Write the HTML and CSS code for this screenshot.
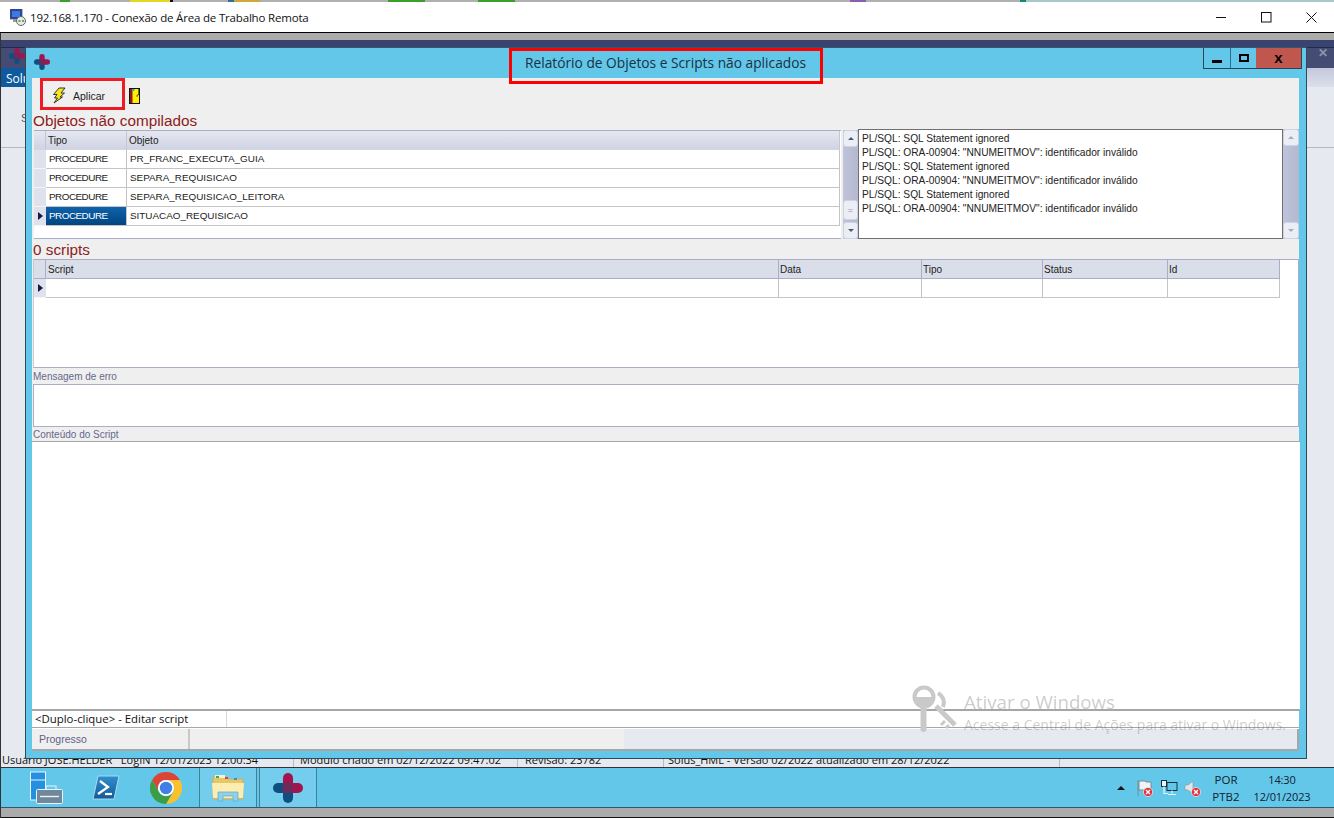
FILE: index.html
```html
<!DOCTYPE html>
<html lang="pt-BR">
<head>
    <meta charset="UTF-8">
    <title>192.168.1.170 - Conexão de Área de Trabalho Remota</title>
    <link rel="stylesheet" href="styles.css">
</head>
<body>
    <svg class="defs" width="0" height="0">
        <symbol id="solus" viewBox="0 0 30 30">
            <path fill="#0f4e80" d="M14 10H5a5 5 0 0 0 0 10h9z"/>
            <path fill="#0f4e80" d="M10 16v9a5 5 0 0 0 10 0v-9z"/>
            <path fill="#a3144f" d="M16 10h9a5 5 0 0 1 0 10h-9z"/>
            <path fill="#a3144f" d="M10 14V5a5 5 0 0 1 10 0v9z"/>
            <rect x="10" y="10" width="10" height="10" fill="#6f2a5c"/>
        </symbol>
        <symbol id="redx" viewBox="0 0 10 10">
            <circle cx="5" cy="5" r="4.6" fill="#e0353c" stroke="#fff" stroke-width=".6"/>
            <path d="M3 3l4 4M7 3l-4 4" stroke="#fff" stroke-width="1.3"/>
        </symbol>
    </svg>

    <header class="rdp-bar">
        <div class="rdp-strip"></div>
        <div class="rdp-title">
            <svg class="rdp-icon" width="16" height="17" viewBox="0 0 16 17">
                <rect x="0" y="0" width="12" height="10" fill="#2b3fa8" stroke="#555" stroke-width=".8"/>
                <rect x="2" y="2" width="8" height="6" fill="#3a7be0"/>
                <rect x="3" y="10" width="7" height="3" fill="#999"/>
                <circle cx="11" cy="12" r="4.5" fill="#e9e9e9" stroke="#666"/>
                <path d="M8.5 12h2M12 12h2" stroke="#2a9a3a" stroke-width="1.4"/>
            </svg>
            <span class="rdp-text">192.168.1.170 - Conexão de Área de Trabalho Remota</span>
            <div class="rdp-controls">
                <span class="rdp-btn"><svg width="11" height="11" viewBox="0 0 11 11"><path d="M0 5.5h10" stroke="#111"/></svg></span>
                <span class="rdp-btn"><svg width="11" height="11" viewBox="0 0 11 11"><rect x=".5" y=".5" width="9.5" height="9.5" fill="none" stroke="#111"/></svg></span>
                <span class="rdp-btn"><svg width="11" height="11" viewBox="0 0 11 11"><path d="M.5.5l10 10M10.5.5l-10 10" stroke="#111"/></svg></span>
            </div>
        </div>
    </header>

    <div class="remote">
        <div class="gray-strip"></div>

        <div class="app">
            <div class="app-title">
                <svg class="app-logo" width="16" height="16"><use href="#solus"/></svg>
                <span class="app-close">✕</span>
            </div>
            <div class="app-menu"><span class="app-menu-item">Solus</span></div>
            <div class="app-tools"><span class="app-tool-text">S</span></div>
            <div class="app-body"></div>
            <div class="app-status">
                <span class="st-cell st-user">Usuário JOSE.HELDER &nbsp; LogIN 12/01/2023 12:00:34</span>
                <span class="st-cell st-module">Módulo criado em 02/12/2022 09:47:02</span>
                <span class="st-cell st-rev">Revisão: 23782</span>
                <span class="st-cell st-version">Solus_HML - Versão 02/2022 atualizado em 28/12/2022</span>
            </div>
        </div>

        <footer class="taskbar">
            <div class="task-item">
                <svg width="34" height="34" viewBox="0 0 34 34">
                    <rect x="1.5" y="1" width="15" height="28" fill="#2490df" stroke="#e8f4fb"/>
                    <path d="M2 9h14" stroke="#e8f4fb"/>
                    <rect x="17" y="15" width="10" height="5" fill="none" stroke="#e8f4fb"/>
                    <rect x="7.5" y="18.5" width="26" height="14" rx="1" fill="#71889c" stroke="#e8f4fb"/>
                    <path d="M11 25.5h19" stroke="#e8f4fb" stroke-width="1.4"/>
                </svg>
            </div>
            <div class="task-item">
                <svg width="28" height="25" viewBox="0 0 28 25">
                    <defs>
                        <linearGradient id="psfill" x1="0" y1="0" x2="0" y2="1">
                            <stop offset="0" stop-color="#2f8fd0"/>
                            <stop offset="1" stop-color="#155a94"/>
                        </linearGradient>
                    </defs>
                    <path d="M6 1h21l-5 23H1z" fill="url(#psfill)" stroke="#a9d8f0"/>
                    <path d="M8 6l8 6-10 7" fill="none" stroke="#fff" stroke-width="2.2"/>
                    <path d="M13 19h7" stroke="#fff" stroke-width="2.2"/>
                </svg>
            </div>
            <div class="task-item">
                <svg width="32" height="32" viewBox="0 0 32 32">
                    <path fill="#db4437" d="M2.14 8A16 16 0 0 1 29.86 8H16A8 8 0 0 0 9 20z"/>
                    <path fill="#fbc02d" d="M29.86 8A16 16 0 0 1 16 32L23 20A8 8 0 0 0 16 8z"/>
                    <path fill="#3c9d47" d="M16 32A16 16 0 0 1 2.14 8L9 20A8 8 0 0 0 23 20z"/>
                    <circle cx="16" cy="16" r="8" fill="#fff"/>
                    <circle cx="16" cy="16" r="6.2" fill="#3f7fe6"/>
                </svg>
            </div>
            <div class="task-item task-active task-first">
                <svg width="32" height="28" viewBox="0 0 32 28">
                    <path d="M1 3h13l2 2h15v20H1z" fill="#e9c766" stroke="#c9a94e" stroke-width=".6"/>
                    <rect x="3" y="1" width="10" height="3" fill="#f6f1d8"/>
                    <rect x="4" y="2" width="3" height="2" fill="#35b34a"/>
                    <rect x="13" y="3" width="3" height="2" fill="#d8473a"/>
                    <rect x="22" y="4" width="3" height="2" fill="#3a8fd8"/>
                    <path d="M0 9h32l-1 15H1z" fill="#fbeeb0"/>
                    <path d="M6 18h20v9h-5v-5H11v5H6z" fill="#8fd0ec" stroke="#5fa9cc" stroke-width=".7"/>
                </svg>
            </div>
            <div class="task-item task-active">
                <svg width="30" height="30"><use href="#solus"/></svg>
            </div>

            <div class="tray">
                <span class="tray-arrow"></span>
                <span class="tray-icon">
                    <svg width="18" height="18" viewBox="0 0 18 18">
                        <path d="M2 1v16M3 2h6l1 1h5v8H3z" fill="#eef3f6" stroke="#7a8a96"/>
                        <use href="#redx" x="7" y="8" width="10" height="10"/>
                    </svg>
                </span>
                <span class="tray-icon tray-net">
                    <svg width="18" height="18" viewBox="0 0 18 18">
                        <rect x="7" y="3.5" width="10" height="8" fill="#63c7ea" stroke="#16323e"/>
                        <rect x="1.5" y="1.5" width="5" height="6" fill="#e8f6fb" stroke="#16323e"/>
                        <path d="M4 7.5v7h4M12 11.5v3M8 15.5h8" fill="none" stroke="#e8f6fb" stroke-width="1.2"/>
                    </svg>
                </span>
                <span class="tray-icon">
                    <svg width="18" height="18" viewBox="0 0 18 18">
                        <path d="M1 6h3l5-4v13l-5-4H1z" fill="#dfe6ea" stroke="#8a98a2" stroke-width=".7"/>
                        <use href="#redx" x="7" y="8" width="10" height="10"/>
                    </svg>
                </span>
                <div class="tray-lang"><span>POR</span><span>PTB2</span></div>
                <div class="tray-clock"><span>14:30</span><span>12/01/2023</span></div>
            </div>
        </footer>
        <div class="gray-strip gray-bottom"></div>

        <!-- janela do relatorio -->
        <section class="dialog">
            <div class="dialog-title">
                <svg class="dialog-logo" width="16" height="16"><use href="#solus"/></svg>
                <h1 class="dialog-caption">Relatório de Objetos e Scripts não aplicados</h1>
                <div class="dialog-controls">
                    <span class="ctl ctl-min"><i></i></span>
                    <span class="ctl ctl-max"><i></i></span>
                    <span class="ctl ctl-close">x</span>
                </div>
            </div>

            <div class="dialog-body">
                <div class="toolbar">
                    <button class="tool-apply" type="button">
                        <svg width="14" height="17" viewBox="0 0 14 16">
                            <path d="M7 .5h6L9 5.5h3.5L8 9.5h2.5L2 15.5l3.5-5H2.5L5 7H1.5z" fill="#f6e51e" stroke="#222" stroke-width=".9"/>
                        </svg>
                        Aplicar
                    </button>
                    <svg class="tool-exit" width="11" height="16" viewBox="0 0 11 16">
                        <rect x=".5" y=".5" width="10" height="15" fill="#ffef00" stroke="#111"/>
                        <path d="M1 1h2.5v14H1z" fill="#8c1a1a"/>
                        <rect x="3.5" y="1" width="2" height="2" fill="#1fb4c4"/>
                        <path d="M9.5 1v6H8v2" fill="none" stroke="#111" stroke-width=".6"/>
                    </svg>
                </div>

                <h2 class="section-head">Objetos não compilados</h2>
                <div class="objects-row">
                    <div class="grid grid-objects">
                        <table>
                            <colgroup><col class="c-ind"><col class="c-tipo"><col class="c-objeto"></colgroup>
                            <thead><tr><th></th><th>Tipo</th><th>Objeto</th></tr></thead>
                            <tbody>
                                <tr><td class="ind"></td><td class="kind">PROCEDURE</td><td>PR_FRANC_EXECUTA_GUIA</td></tr>
                                <tr><td class="ind"></td><td class="kind">PROCEDURE</td><td>SEPARA_REQUISICAO</td></tr>
                                <tr><td class="ind"></td><td class="kind">PROCEDURE</td><td>SEPARA_REQUISICAO_LEITORA</td></tr>
                                <tr><td class="ind ind-current"></td><td class="kind selected">PROCEDURE</td><td>SITUACAO_REQUISICAO</td></tr>
                            </tbody>
                        </table>
                    </div>
                    <div class="scrollbar">
                        <span class="sb-btn sb-up"></span>
                        <span class="sb-fill"></span>
                        <span class="sb-thumb">=</span>
                        <span class="sb-btn sb-down"></span>
                    </div>
                    <div class="memo">
                        <div>PL/SQL: SQL Statement ignored</div>
                        <div>PL/SQL: ORA-00904: "NNUMEITMOV": identificador inválido</div>
                        <div>PL/SQL: SQL Statement ignored</div>
                        <div>PL/SQL: ORA-00904: "NNUMEITMOV": identificador inválido</div>
                        <div>PL/SQL: SQL Statement ignored</div>
                        <div>PL/SQL: ORA-00904: "NNUMEITMOV": identificador inválido</div>
                    </div>
                    <div class="scrollbar scrollbar-off">
                        <span class="sb-btn sb-up"></span>
                        <span class="sb-fill"></span>
                        <span class="sb-btn sb-down"></span>
                    </div>
                </div>

                <h2 class="section-head">0 scripts</h2>
                <div class="grid grid-scripts">
                    <table>
                        <colgroup><col class="c-ind"><col class="c-script"><col class="c-data"><col class="c-stipo"><col class="c-status"><col class="c-id"></colgroup>
                        <thead><tr><th></th><th class="th-script">Script</th><th>Data</th><th>Tipo</th><th>Status</th><th>Id</th></tr></thead>
                        <tbody>
                            <tr><td class="ind ind-current"></td><td></td><td></td><td></td><td></td><td></td></tr>
                        </tbody>
                    </table>
                </div>

                <label class="field-label">Mensagem de erro</label>
                <div class="field field-error"></div>
                <label class="field-label field-label-tight">Conteúdo do Script</label>
                <div class="field field-content"></div>

                <div class="hint-row"><span class="hint-cell">&lt;Duplo-clique&gt; - Editar script</span></div>
                <div class="progress-row">
                    <span class="progress-label">Progresso</span>
                    <span class="progress-mid"></span>
                    <span class="progress-rest"></span>
                </div>
            </div>
        </section>

        <!-- marca d'agua do windows -->
        <div class="watermark">
            <svg width="46" height="48" viewBox="0 0 46 48">
                <circle cx="12" cy="12" r="9.5" fill="none" stroke="#c9c9c9" stroke-width="4"/>
                <path d="M2 12a10 10 0 0 0 20 0z" fill="#c9c9c9"/>
                <rect x="8.5" y="20" width="6" height="27" rx="3" fill="#c9c9c9"/>
                <path d="M24 21l19 19" stroke="#c9c9c9" stroke-width="5"/>
                <path d="M26 8c5 3 7 8 5 14" fill="none" stroke="#c9c9c9" stroke-width="4"/>
                <path d="M33 36l-4 4M37 40l-3 3" stroke="#c9c9c9" stroke-width="3"/>
            </svg>
            <div class="watermark-text">
                <span class="wm-title">Ativar o Windows</span>
                <span class="wm-sub">Acesse a Central de Ações para ativar o Windows.</span>
            </div>
        </div>
    </div>
</body>
</html>
```

FILE: styles.css
```css
* {
    box-sizing: border-box;
}
html, body {
    margin: 0;
    height: 818px;
    overflow: hidden;
}
body {
    width: 1334px;
    background: #fff;
    font-family: "Liberation Sans", Arial, sans-serif;
    color: #111;
}
.defs {
    position: absolute;
}

/* barra do cliente RDP */
.rdp-bar {
    height: 33px;
    border-bottom: 1px solid #000;
    background: #fff;
}
.rdp-strip {
    height: 2px;
    background: linear-gradient(90deg,
        #b0b0b0 0 60px, #3aa02a 60px 70px, #b0b0b0 70px 130px, #e6d820 130px 170px, #111 170px 173px,
        #b0b0b0 173px 228px, #2f6f9f 228px 234px, #d0a83a 234px 260px, #b0b0b0 260px 388px,
        #3aa02a 388px 425px, #b0b0b0 425px 478px, #3aa02a 478px 515px, #b0b0b0 515px 850px,
        #8a5fb0 850px 866px, #b0b0b0 866px 1020px, #0f8a78 1020px 1026px, #a8c8cc 1026px 1340px);
}
.rdp-title {
    height: 30px;
    display: flex;
    align-items: center;
    padding-left: 10px;
}
.rdp-icon {
    margin-right: 4px;
    margin-top: 1px;
}
.rdp-text {
    font-family: "Open Sans", sans-serif;
    font-size: 11.5px;
    letter-spacing: -0.18px;
}
.rdp-controls {
    margin-left: auto;
    display: flex;
}
.rdp-btn {
    width: 45px;
    display: flex;
    justify-content: center;
    align-items: center;
}

.remote {
    position: relative;
    height: 785px;
    display: flex;
    flex-direction: column;
    border-left: 1px solid #333;
}
.gray-strip {
    height: 7px;
    background: #ababab;
}
.gray-bottom {
    height: 10px;
    border-bottom: 1px solid #111;
}

/* aplicacao que fica atras do dialogo */
.app {
    height: 728px;
    display: flex;
    flex-direction: column;
    background: #e6e9ef;
}
.app-title {
    height: 28px;
    background: linear-gradient(#3a4270 0 7px, #22294f 7px 8px, #454c74 8px 100%);
    display: flex;
    align-items: center;
    padding: 0 6px 0 8px;
}
.app-logo {
    margin-top: 4px;
}
.app-close {
    margin-left: auto;
    color: #8d94ad;
    font-size: 12px;
    font-weight: bold;
    margin-top: -3px;
}
.app-menu {
    height: 19px;
    background: linear-gradient(#c4c8dc, #dcdfea);
}
.app-menu-item {
    display: block;
    width: 40px;
    height: 19px;
    padding: 2px 0 0 5px;
    background: #0f5a9e;
    color: #fff;
    font-size: 12px;
    font-family: "Open Sans", sans-serif;
}
.app-tools {
    height: 61px;
    border-bottom: 1px solid #b4b8c4;
    padding: 25px 0 0 20px;
    font-size: 11px;
}
.app-tool-text {
    color: #555;
}
.app-body {
    flex: 1;
}
.app-status {
    height: 18px;
    border-bottom: 1px solid #333;
    display: flex;
    font-family: "Open Sans", sans-serif;
    font-size: 11px;
    line-height: 19px;
    white-space: nowrap;
}
.st-cell {
    padding-left: 1px;
    border-right: 1px solid #b8bcc8;
    overflow: hidden;
}
.st-user { width: 293px; }
.st-module { width: 224px; padding-left: 6px; }
.st-rev { width: 146px; padding-left: 7px; }
.st-version { width: 396px; padding-left: 4px; }

/* barra de tarefas */
.taskbar {
    height: 40px;
    background: #63c7ea;
    border-bottom: 1px solid #34566a;
    display: flex;
    align-items: center;
    padding-left: 15px;
}
.task-item {
    width: 60px;
    height: 39px;
    display: flex;
    align-items: center;
    justify-content: center;
}
.task-active {
    width: 58px;
    margin-right: 2px;
    background: #74cdec;
    border-left: 1px solid #3e7f99;
    border-right: 1px solid #3e7f99;
}
.task-first {
    margin-left: 3px;
}
.tray {
    margin-left: auto;
    display: flex;
    align-items: center;
    font-family: "Open Sans", sans-serif;
    font-size: 11.5px;
    color: #10222c;
    padding-right: 18px;
}
.tray-arrow {
    width: 0;
    height: 0;
    border-left: 4px solid transparent;
    border-right: 4px solid transparent;
    border-bottom: 4px solid #111;
    margin-right: 8px;
}
.tray-icon {
    width: 23px;
    height: 18px;
    display: flex;
    justify-content: center;
}
.tray-net {
    margin: 0 1px;
}
.tray-lang, .tray-clock {
    display: flex;
    flex-direction: column;
    align-items: center;
    line-height: 17px;
}
.tray-lang {
    width: 36px;
    margin-left: 4px;
}
.tray-clock {
    width: 68px;
    margin-left: 4px;
    font-size: 11px;
    letter-spacing: -0.15px;
}

/* dialogo */
.dialog {
    position: absolute;
    left: 24px;
    top: 14px;
    width: 1282px;
    height: 712px;
    background: #63c7ea;
    border: 1px solid #2f4a58;
    border-top-color: #34566a;
    padding: 0 7px 7px 6px;
    display: flex;
    flex-direction: column;
}
.dialog-title {
    position: relative;
    height: 30px;
    flex: none;
    display: flex;
    align-items: center;
    justify-content: center;
}
.dialog-logo {
    position: absolute;
    left: 2px;
    top: 6px;
}
.dialog-caption {
    margin: 0;
    width: 314px;
    height: 36px;
    margin-top: 5px;
    border: 3px solid #f00;
    z-index: 2;
    text-align: center;
    font-family: "Open Sans", sans-serif;
    font-size: 13.75px;
    font-weight: normal;
    line-height: 23px;
    color: #17323f;
}
.dialog-controls {
    position: absolute;
    right: -3px;
    top: 0;
    height: 21px;
    display: flex;
    border: 1px solid #2c4350;
    border-top: none;
}
.ctl {
    height: 20px;
    display: flex;
    align-items: center;
    justify-content: center;
}
.ctl-min {
    width: 27px;
    border-right: 1px solid #2c6f8a;
}
.ctl-min i {
    width: 10px;
    height: 3px;
    margin-top: 6px;
    background: #000;
}
.ctl-max {
    width: 25px;
}
.ctl-max i {
    width: 10px;
    height: 8px;
    border: 2px solid #000;
}
.ctl-close {
    width: 45px;
    background: #c0574f;
    font-size: 15px;
    font-weight: bold;
    line-height: 1;
    color: #000;
    padding-bottom: 1px;
}

.dialog-body {
    flex: 1;
    min-height: 0;
    display: flex;
    flex-direction: column;
    background: #efefef;
    font-size: 10px;
}
.toolbar {
    height: 32px;
    flex: none;
    display: flex;
    align-items: center;
    padding-left: 8px;
}
.tool-apply {
    width: 85px;
    height: 32px;
    display: flex;
    align-items: center;
    gap: 7px;
    padding: 3px 0 0 9px;
    border: 3px solid #ed1c24;
    background: transparent;
    font: 10.5px "Liberation Sans", Arial, sans-serif;
    color: #222;
}
.tool-exit {
    margin-left: 4px;
    margin-top: 4px;
}
.section-head {
    margin: 0;
    height: 20px;
    flex: none;
    padding: 1px 0 0 1px;
    font-size: 15.3px;
    font-weight: normal;
    line-height: 19px;
    color: #8c1c1c;
}

.objects-row {
    height: 109px;
    flex: none;
    display: flex;
}
.grid {
    background: #fff;
    border: 1px solid #a9adc8;
    overflow: hidden;
}
.grid-objects {
    width: 807px;
    height: 109px;
    margin-left: 2px;
    border-left: none;
    border-right: none;
}
.grid table {
    table-layout: fixed;
    border-collapse: separate;
    border-spacing: 0;
}
.grid-objects table { width: 806px; }
.grid-scripts table { width: 1246px; }
.c-ind { width: 12px; }
.c-tipo { width: 81px; }
.c-objeto { width: 713px; }
.c-script { width: 733px; }
.c-data { width: 143px; }
.c-stipo { width: 121px; }
.c-status { width: 125px; }
.c-id { width: 112px; }

.grid th {
    height: 19px;
    padding: 0 2px;
    font-size: 10px;
    font-weight: normal;
    text-align: left;
    color: #222;
    background: linear-gradient(#e6e8f0, #cfd3e3);
    border-right: 1px solid #c2c6d8;
    border-bottom: 1px solid #d4d7e3;
}
.grid-scripts th {
    padding-left: 1px;
    background: #dadee9;
    border-right-color: #a9adc8;
    border-bottom-color: #a9adc8;
}
.grid-scripts th.th-script {
    padding-left: 2px;
}
.grid td {
    height: 19px;
    padding: 0 3px 1px;
    font-size: 9.9px;
    color: #222;
    white-space: nowrap;
    border-right: 1px solid #c4c4c4;
    border-bottom: 1px solid #c4c4c4;
}
.grid td.kind {
    letter-spacing: -0.5px;
}
.grid td.ind {
    padding: 0;
    background: #dfe2ec;
    border-right: none;
    border-bottom: 1px solid #f4f4f8;
}
.grid td.ind-current {
    position: relative;
}
.ind-current::after {
    content: "";
    position: absolute;
    left: 4px;
    top: 5px;
    border-left: 5px solid #14184a;
    border-top: 4px solid transparent;
    border-bottom: 4px solid transparent;
}
.grid td.selected {
    background: linear-gradient(#0e62ac, #01457f);
    color: #fff;
}

.scrollbar {
    width: 15px;
    margin-left: 2px;
    display: flex;
    flex-direction: column;
    background: linear-gradient(90deg, #c0c4da, #b4b8d0);
}
.scrollbar-off {
    width: 16px;
    height: 110px;
    margin: -1px 0 0;
}
.sb-btn, .sb-thumb {
    height: 17px;
    flex: none;
    background: #eceef5;
    border: 1px solid #cfd2e2;
    border-radius: 3px;
    position: relative;
}
.sb-fill {
    flex: 1;
}
.sb-thumb {
    height: 20px;
    margin-bottom: 2px;
    font-size: 9px;
    line-height: 18px;
    text-align: center;
    color: #8a8ea8;
}
.sb-btn::after {
    content: "";
    position: absolute;
    left: 4px;
    top: 6px;
    border-left: 3px solid transparent;
    border-right: 3px solid transparent;
}
.sb-up::after { border-bottom: 3px solid #50557e; }
.sb-down::after { border-top: 3px solid #50557e; }
.scrollbar-off .sb-up::after { border-bottom-color: #a8acc0; }
.scrollbar-off .sb-down::after { border-top-color: #a8acc0; }

.memo {
    width: 425px;
    height: 110px;
    margin-top: -1px;
    background: #fff;
    border: 1px solid #707070;
    padding: 2px 0 0 3px;
    font-size: 10.2px;
    line-height: 14px;
    color: #222;
    white-space: nowrap;
}

.grid-scripts {
    height: 109px;
    flex: none;
    margin-left: 1px;
    width: 1266px;
    border-left-color: #c8cad8;
}
.field-label {
    display: block;
    height: 16px;
    flex: none;
    padding: 3px 0 0 1px;
    font-size: 10px;
    color: #66688a;
}
.field-label-tight {
    height: 14px;
    padding-top: 1px;
    line-height: 13px;
}
.field {
    background: #fff;
    border: 1px solid #a9adc8;
    margin-left: 1px;
    width: 1266px;
}
.field-error {
    height: 43px;
    flex: none;
}
.field-content {
    flex: 1;
    min-height: 0;
    margin-left: 0;
    width: 1268px;
    border-width: 1px 0 0;
    border-color: #a6a6a6;
}
.hint-row {
    height: 19px;
    flex: none;
    background: #fff;
    border-top: 2px solid #a6a6a6;
    border-bottom: 1px solid #a6a6a6;
    font-family: "Open Sans", sans-serif;
    font-size: 11.4px;
    line-height: 16px;
    color: #111;
}
.hint-cell {
    display: block;
    width: 195px;
    height: 16px;
    padding-left: 3px;
    white-space: nowrap;
    border-right: 1px solid #d8d8d8;
}
.progress-row {
    height: 23px;
    flex: none;
    display: flex;
    border-top: 1px solid #fff;
    border-bottom: 2px solid #a6a6a6;
}
.progress-label {
    width: 158px;
    padding: 4px 0 0 7px;
    background: #efefef;
    border-right: 2px solid #c8c8c8;
    font-size: 10.5px;
    color: #60628a;
}
.progress-mid {
    width: 434px;
    background: #efefef;
}
.progress-rest {
    flex: 1;
    background: #e6e9ef;
    border-right: 2px solid #a6a6a6;
}

.watermark {
    position: absolute;
    left: 911px;
    top: 652px;
    display: flex;
    gap: 6px;
    pointer-events: none;
}
.watermark-text {
    display: flex;
    flex-direction: column;
    padding-top: 5px;
    font-family: "Open Sans", sans-serif;
    color: rgba(80, 80, 80, .3);
}
.wm-title {
    font-size: 18.7px;
    line-height: 24px;
}
.wm-sub {
    font-size: 14px;
    line-height: 22px;
    white-space: nowrap;
}
```
